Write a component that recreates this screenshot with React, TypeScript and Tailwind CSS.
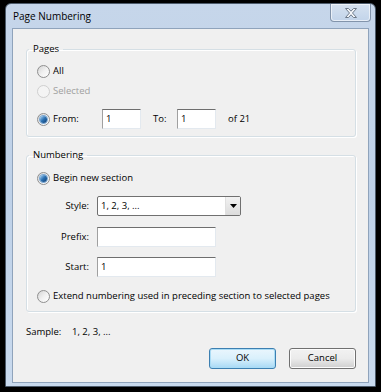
import { useState } from 'react';

const font = { fontFamily: '"Open Sans", "Liberation Sans", sans-serif' };

const Radio = ({ checked, disabled }: { checked?: boolean; disabled?: boolean }) => (
  <span
    className={`flex h-[13px] w-[13px] shrink-0 items-center justify-center rounded-full border ${
      disabled ? 'border-[#cfcfcf] bg-[#f4f4f4]' : 'border-[#8f8f8f] bg-gradient-to-br from-[#d4d4d4] via-[#f0f0f0] to-white'
    }`}
  >
    {checked && (
      <span className="h-[7px] w-[7px] rounded-full bg-gradient-to-br from-[#a9d8f8] via-[#2b70b1] to-[#0d3d73] shadow-[0_0_0_1px_#7aa7d2]" />
    )}
  </span>
);

const TextBox = ({ value, width }: { value: string; width: string }) => (
  <div
    className={`${width} flex h-[20px] items-center border border-t-[#6e6e6e] border-l-[#a0a0a0] border-r-[#e3e9ef] border-b-[#e3e9ef] bg-white pl-[3px] text-[9.5px] text-black`}
  >
    {value}
  </div>
);

const CloseGlyph = () => (
  <svg width="14" height="12" viewBox="0 0 14 12">
    <path
      d="M1.5 1.5h3l2.5 2.7 2.5-2.7h3l-4 4.5 4 4.5h-3L7 7.8 4.5 10.5h-3l4-4.5z"
      fill="#f6f8fb"
      stroke="#6d7a8a"
      strokeWidth="1"
      strokeLinejoin="round"
    />
  </svg>
);

export default function App() {
  const [start] = useState('1');

  return (
    <div className="h-[392px] w-[381px] bg-black pl-[5px] pt-[3px]" style={font}>
      <div className="flex h-[384px] w-[371px] flex-col rounded-t-[6px] border border-[#4d5b6b] bg-gradient-to-b from-[#c6d6ea] via-[#bed1e8] to-[#c9daee] px-[6px] pb-[3px]">
        {/* title bar */}
        <div className="flex h-[24px] shrink-0 items-start justify-between">
          <span className="pl-[1px] pt-[5px] text-[10px] text-black">Page Numbering</span>
          <div className="mr-[-2px] flex h-[18px] w-[41px] items-center justify-center rounded-b-[4px] border border-t-0 border-[#8294ab] bg-gradient-to-b from-[#d6e2f0] to-[#c2d4ea] shadow-[inset_0_0_0_1px_rgba(255,255,255,0.6)]">
            <CloseGlyph />
          </div>
        </div>

        {/* client area */}
        <div className="flex flex-1 flex-col border border-[#8fa3bb] bg-[#f0f0f0] pl-[13px] pr-[12px] pt-[13px] text-[9.5px] text-black">
          {/* Pages */}
          <fieldset className="rounded-[3px] border border-[#d5dfe5] pb-[7px] pl-[10px] shadow-[inset_1px_1px_0_#fff,1px_1px_0_#fff]">
            <legend className="ml-[-8px] px-[4px] text-[9.5px] leading-[14px]">Pages</legend>
            <div className="mt-[5px] flex h-[20px] items-center gap-[3px]">
              <Radio />
              <span>All</span>
            </div>
            <div className="flex h-[20px] items-center gap-[3px] text-[#a0a0a0]">
              <Radio disabled />
              <span>Selected</span>
            </div>
            <div className="mt-[8px] flex h-[20px] items-center">
              <div className="flex w-[65px] items-center gap-[3px]">
                <Radio checked />
                <span>From:</span>
              </div>
              <TextBox value="1" width="w-[39px]" />
              <span className="ml-[12px] w-[24px]">To:</span>
              <TextBox value="1" width="w-[39px]" />
              <span className="ml-[12px]">of 21</span>
            </div>
          </fieldset>

          {/* Numbering */}
          <fieldset className="mt-[11px] rounded-[3px] border border-[#d5dfe5] pb-[5px] pl-[10px] shadow-[inset_1px_1px_0_#fff,1px_1px_0_#fff]">
            <legend className="ml-[-8px] px-[4px] text-[9.5px] leading-[14px]">Numbering</legend>
            <div className="mt-[6px] flex h-[20px] items-center gap-[3px]">
              <Radio checked />
              <span>Begin new section</span>
            </div>
            <div className="mt-[8px] flex h-[20px] items-center">
              <span className="ml-[-10px] w-[62px] text-right">Style:</span>
              <div className="ml-[8px] flex h-[20px] w-[144px] items-center rounded-[2px] border border-[#707070] bg-white">
                <span className="flex-1 pl-[3px]">1, 2, 3, ...</span>
                <span className="flex h-full w-[15px] items-center justify-center border-l border-[#e0e0e0] bg-gradient-to-b from-[#f2f2f2] to-[#dcdcdc]">
                  <svg width="7" height="4" viewBox="0 0 7 4">
                    <path d="M0 0h7L3.5 4z" fill="#000" />
                  </svg>
                </span>
              </div>
            </div>
            <div className="mt-[11px] flex h-[20px] items-center">
              <span className="ml-[-10px] w-[62px] text-right">Prefix:</span>
              <div className="ml-[8px]">
                <TextBox value="" width="w-[119px]" />
              </div>
            </div>
            <div className="mt-[10px] flex h-[20px] items-center">
              <span className="ml-[-10px] w-[62px] text-right">Start:</span>
              <div className="ml-[8px]">
                <TextBox value={start} width="w-[119px]" />
              </div>
            </div>
            <div className="mt-[9px] flex h-[20px] items-center gap-[3px]">
              <Radio />
              <span className="whitespace-nowrap">Extend numbering used in preceding section to selected pages</span>
            </div>
          </fieldset>

          {/* Sample */}
          <div className="mt-[12px] flex h-[16px] items-center">
            <span className="w-[46px]">Sample:</span>
            <span>1, 2, 3, ...</span>
          </div>

          {/* Buttons */}
          <div className="mt-[8px] flex justify-end gap-[13px]">
            <button className="h-[21px] w-[67px] rounded-[3px] border border-[#3c7fb1] bg-gradient-to-b from-[#eaf6fd] via-[#d9f0fc] to-[#a7d9f5] text-[9.5px] shadow-[inset_0_0_0_1px_#aadcf5]">
              OK
            </button>
            <button className="h-[21px] w-[67px] rounded-[3px] border border-[#707070] bg-gradient-to-b from-[#f2f2f2] via-[#ebebeb] to-[#cfcfcf] text-[9.5px] shadow-[inset_0_0_0_1px_#fcfcfc]">
              Cancel
            </button>
          </div>
        </div>
      </div>
    </div>
  );
}
